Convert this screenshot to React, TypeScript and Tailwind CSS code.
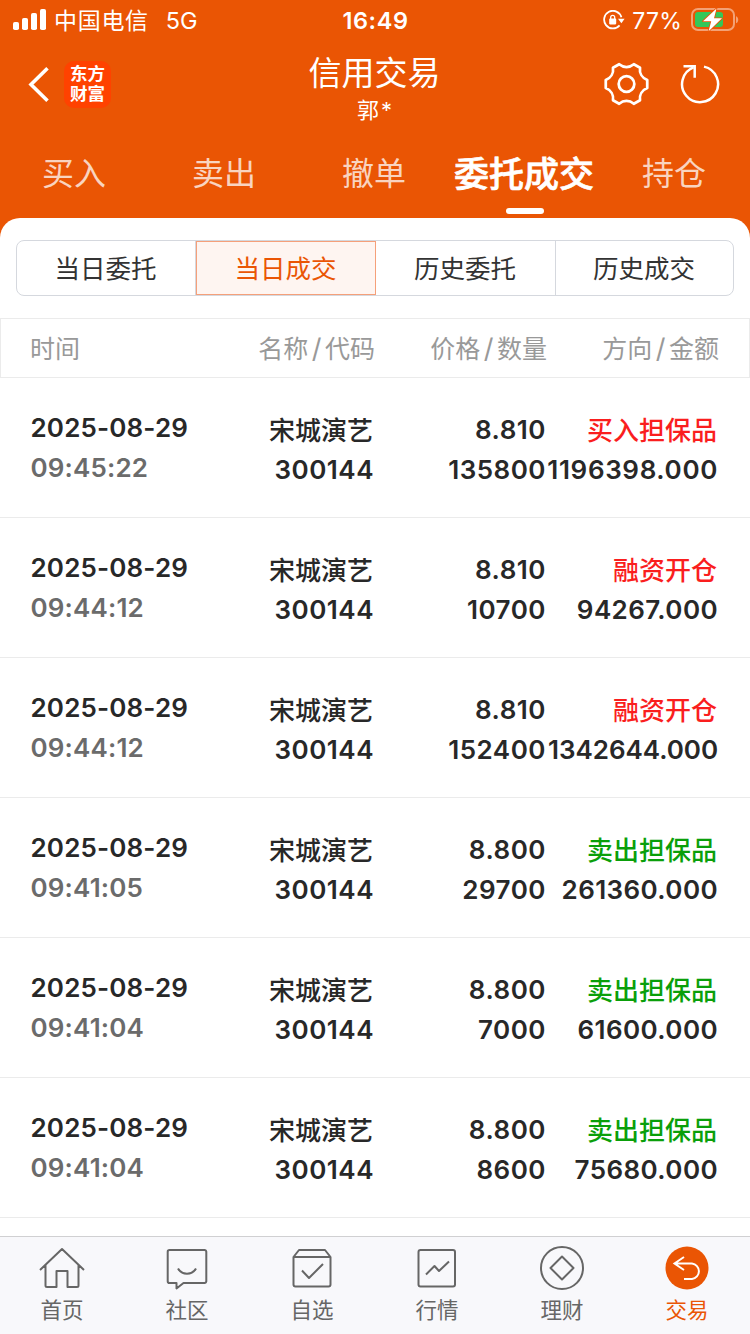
import type { ReactNode } from 'react';
import clsx from 'clsx';

type Side = 'buy' | 'sell';

type Deal = {
  date: string;
  time: string;
  name: string;
  code: string;
  price: string;
  volume: string;
  direction: string;
  amount: string;
  side: Side;
  amountClass?: string;
};

const DEALS: Deal[] = [
  { date: '2025-08-29', time: '09:45:22', name: '宋城演艺', code: '300144', price: '8.810', volume: '135800', direction: '买入担保品', amount: '1196398.000', side: 'buy', amountClass: 'tracking-[0.65px]' },
  { date: '2025-08-29', time: '09:44:12', name: '宋城演艺', code: '300144', price: '8.810', volume: '10700', direction: '融资开仓', amount: '94267.000', side: 'buy' },
  { date: '2025-08-29', time: '09:44:12', name: '宋城演艺', code: '300144', price: '8.810', volume: '152400', direction: '融资开仓', amount: '1342644.000', side: 'buy', amountClass: 'tracking-[-0.05px]' },
  { date: '2025-08-29', time: '09:41:05', name: '宋城演艺', code: '300144', price: '8.800', volume: '29700', direction: '卖出担保品', amount: '261360.000', side: 'sell' },
  { date: '2025-08-29', time: '09:41:04', name: '宋城演艺', code: '300144', price: '8.800', volume: '7000', direction: '卖出担保品', amount: '61600.000', side: 'sell' },
  { date: '2025-08-29', time: '09:41:04', name: '宋城演艺', code: '300144', price: '8.800', volume: '8600', direction: '卖出担保品', amount: '75680.000', side: 'sell' },
];

const TABS = ['买入', '卖出', '撤单', '委托成交', '持仓'];
const SEGMENTS = ['当日委托', '当日成交', '历史委托', '历史成交'];

function StatusBar() {
  return (
    <div className="grid h-10 grid-cols-[1fr_auto_1fr] items-center pr-[11px] pl-[13px]">
      <div className="flex items-center">
        <svg width="34" height="22" viewBox="0 0 34 22" fill="#fff">
          <rect x="0" y="13" width="6" height="8" rx="1.8" />
          <rect x="9" y="9" width="6" height="12" rx="1.8" />
          <rect x="18" y="4" width="6" height="17" rx="1.8" />
          <rect x="27" y="0" width="6" height="21" rx="1.8" />
        </svg>
        <span className="ml-[7px] pt-[2px] text-[23px] tracking-[0.7px]">中国电信</span>
        <span className="ml-[17px] pt-[2px] text-[23.5px]">5G</span>
      </div>
      <div className="pt-[2px] pr-px text-[23.5px] font-semibold tracking-[0.6px]">16:49</div>
      <div className="flex items-center justify-end">
        <svg width="22" height="20" viewBox="0 0 22 20" fill="none">
          <path d="M18.4 7.2A8.8 8.8 0 1 0 16.6 15.4" stroke="#fff" strokeWidth="1.8" />
          <path d="M15 8.8h6.6l-3.2 4.4z" fill="#fff" />
          <rect x="6.2" y="8.6" width="7" height="5.8" rx="0.8" fill="#fff" />
          <path d="M7.7 9V7.3a2 2 0 0 1 4 0V9" stroke="#fff" strokeWidth="1.3" />
        </svg>
        <span className="ml-[7px] pt-[2px] text-[23px] tracking-[0.2px]">77%</span>
        <svg className="ml-[9px]" width="48" height="24" viewBox="0 0 48 24" fill="none">
          <rect x="1" y="1" width="42" height="21" rx="6" stroke="#fff" strokeOpacity="0.45" strokeWidth="2" />
          <path d="M45 8.2c3 1 3 6 0 7z" fill="#fff" fillOpacity="0.45" />
          <rect x="4" y="4" width="28" height="15" rx="3" fill="#34c759" />
          <path
            d="M25.5 0.5L12 13.2h8.2L17.6 23.2 31 10.3h-8z"
            fill="#fff"
            stroke="#ea5504"
            strokeWidth="1.6"
            strokeLinejoin="round"
            paintOrder="stroke"
          />
        </svg>
      </div>
    </div>
  );
}

function NavBar() {
  return (
    <div className="grid h-[88px] grid-cols-[1fr_auto_1fr]">
      <div className="flex items-center pl-[28px]">
        <svg width="22" height="36" viewBox="0 0 22 36" fill="none" stroke="#fff" strokeWidth="3.6">
          <path d="M19.5 2.3L3 18.5l16.5 16.2" />
        </svg>
        <div className="ml-[14px] flex h-[47px] w-[47px] flex-col items-center justify-center rounded-[10px] bg-[#ff4200] text-[17.5px] leading-[20px] font-bold">
          <span>东方</span>
          <span>财富</span>
        </div>
      </div>
      <div className="flex flex-col items-center pt-[11px] pr-px">
        <div className="text-[33px] leading-[44px]">信用交易</div>
        <div className="text-[22px] leading-[31px]">
          郭<span className="ml-[2px]">*</span>
        </div>
      </div>
      <div className="flex items-center justify-end gap-[31px] pr-[30px]">
        <svg width="45" height="44" viewBox="0 0 46 44" fill="none" stroke="#fff" strokeWidth="2.8" strokeLinejoin="round">
          <path d="M15.5 1.8C20 5.6 26 5.6 30.5 1.8L36.8 5.4C36 11 39 15.8 44.2 18V26C39 28.2 36 33 36.8 38.6L30.5 42.2C26 38.4 20 38.4 15.5 42.2L9.2 38.6C10 33 7 28.2 1.8 26V18C7 15.8 10 11 9.2 5.4Z" />
          <circle cx="23" cy="22" r="8" />
        </svg>
        <svg width="40" height="40" viewBox="0 0 40 40" fill="none" stroke="#fff" strokeWidth="2.5">
          <path d="M24 2.6A18 18 0 1 1 13.5 3.4" />
          <path d="M3.5 2.3h11.2v11.5" />
        </svg>
      </div>
    </div>
  );
}

function Tabs({ active }: { active: string }) {
  return (
    <div className="grid h-[90px] w-[750px] grid-cols-5">
      {TABS.map((tab) => (
        <div key={tab} className="flex flex-col items-center justify-between pr-[2px] pb-1">
          <span
            className={clsx(
              'pt-[21px] leading-[50px] whitespace-nowrap',
              tab === active
                ? 'text-[35px] font-medium [-webkit-text-stroke:0.7px_#fff]'
                : 'text-[32px] text-white/75'
            )}
          >
            {tab}
          </span>
          {tab === active && <span className="ml-[2px] h-[6px] w-[38px] rounded-full bg-white" />}
        </div>
      ))}
    </div>
  );
}

function Segments({ active }: { active: string }) {
  return (
    <div className="mx-4 grid h-14 grid-cols-[179px_180px_180px_1fr] rounded-lg border border-[#d5d8de] text-[25.5px] text-[#333]">
      {SEGMENTS.map((label, i) => (
        <div
          key={label}
          className={clsx(
            'flex items-center justify-center pt-[2px] pr-px',
            label === active
              ? 'border border-[#f5a07a] bg-[#fef5f1] text-[#ea5504]'
              : i < SEGMENTS.length - 1 && 'border-r border-[#d5d8de]'
          )}
        >
          {label}
        </div>
      ))}
    </div>
  );
}

const GRID = 'grid grid-cols-[170px_175px_172px_172px]';

function HeaderCell({ left, right }: { left: string; right: string }) {
  return (
    <span className="text-right">
      {left}
      <span className="mx-[3.5px] text-[27px]">/</span>
      {right}
    </span>
  );
}

function DealRow({ deal }: { deal: Deal }) {
  return (
    <div
      className={clsx(
        GRID,
        'h-[140px] border-b border-[#ebebeb] pt-8 pl-[30px] text-[26px] leading-10 font-semibold whitespace-nowrap text-[#282828]'
      )}
    >
      <div className="-mt-[2px] pl-[0.5px] tracking-[0.15px]">
        <div>{deal.date}</div>
        <div className="text-[#6b6b6b]">{deal.time}</div>
      </div>
      <div className="text-right">
        <div className="pt-px pr-[2px] leading-[39px] font-medium">{deal.name}</div>
        <div className="pr-[1px] tracking-[0.5px]">{deal.code}</div>
      </div>
      <div className="pr-[1px] text-right tracking-[0.5px]">
        <div>{deal.price}</div>
        <div>{deal.volume}</div>
      </div>
      <div className="text-right">
        <div
          className={clsx(
            'pt-px pr-[2px] leading-[39px] font-medium',
            deal.side === 'buy' ? 'text-[#fa1e1e]' : 'text-[#0a9f0a]'
          )}
        >
          {deal.direction}
        </div>
        <div className={clsx('pr-[1px]', deal.amountClass ?? 'tracking-[0.4px]')}>{deal.amount}</div>
      </div>
    </div>
  );
}

function BottomItem({ label, active, children }: { label: string; active?: boolean; children: ReactNode }) {
  return (
    <div className={clsx('flex flex-col items-center pt-2 pr-px', active ? 'text-[#ea5504]' : 'text-[#666]')}>
      <svg width="48" height="48" viewBox="0 0 48 48" fill="none" stroke="currentColor" strokeWidth="2" strokeLinejoin="round">
        {children}
      </svg>
      <span className="text-[21.5px] leading-[35px]">{label}</span>
    </div>
  );
}

function BottomBar() {
  return (
    <div className="grid h-[98px] shrink-0 grid-cols-6 border-t border-[#d0d0d2] bg-[#f8f8fb]">
      <BottomItem label="首页">
        <path d="M2 25L24 4l22 21M7.5 20v20.5a1.5 1.5 0 0 0 1.5 1.5h9.5V26h11v16H39a1.5 1.5 0 0 0 1.5-1.5V20" />
      </BottomItem>
      <BottomItem label="社区">
        <path d="M6.5 5h35a1.8 1.8 0 0 1 1.8 1.8v29.4a1.8 1.8 0 0 1-1.8 1.8H20.5l-7 5.5V38h-7a1.8 1.8 0 0 1-1.8-1.8V6.8A1.8 1.8 0 0 1 6.5 5z" />
        <path d="M15 23.5c4 7 14 7 18 0" />
      </BottomItem>
      <BottomItem label="自选">
        <path d="M5.5 12L11 5h26l5.5 7v27.5a2 2 0 0 1-2 2h-33a2 2 0 0 1-2-2zM5.5 12h37" />
        <path d="M14 25.5l7 7.5 14-14" />
      </BottomItem>
      <BottomItem label="行情">
        <rect x="5.5" y="5" width="36.5" height="36.5" rx="2" />
        <path d="M13 29.5l8.500-8.500 4.500 5 10-9.500" />
      </BottomItem>
      <BottomItem label="理财">
        <circle cx="24" cy="23" r="21" />
        <path d="M24 11.5L35.5 23 24 34.5 12.5 23z" />
      </BottomItem>
      <BottomItem label="交易" active>
        <circle cx="24" cy="23" r="21.5" fill="currentColor" stroke="none" />
        <path d="M21 12l-9.500 6.500L21 25M12 18.500h17a7.800 7.800 0 0 1 0 15.500h-8" stroke="#fff" strokeLinejoin="miter" />
      </BottomItem>
    </div>
  );
}

export default function App() {
  return (
    <div className="flex h-[1334px] w-[750px] flex-col overflow-hidden bg-[#ea5504] font-['Inter','Noto_Sans_CJK_SC',sans-serif]">
      <header className="shrink-0 text-white">
        <StatusBar />
        <NavBar />
        <Tabs active="委托成交" />
      </header>
      <main className="min-h-0 flex-1 overflow-hidden rounded-t-[20px] bg-white pt-[22px]">
        <Segments active="当日成交" />
        <div
          className={clsx(
            GRID,
            'mt-[22px] h-[60px] items-center border border-[#ebebeb] pt-[3px] pl-[29px] text-[25px] text-[#999]'
          )}
        >
          <span>时间</span>
          <HeaderCell left="名称" right="代码" />
          <HeaderCell left="价格" right="数量" />
          <HeaderCell left="方向" right="金额" />
        </div>
        {DEALS.map((deal, i) => (
          <DealRow key={i} deal={deal} />
        ))}
      </main>
      <BottomBar />
    </div>
  );
}
